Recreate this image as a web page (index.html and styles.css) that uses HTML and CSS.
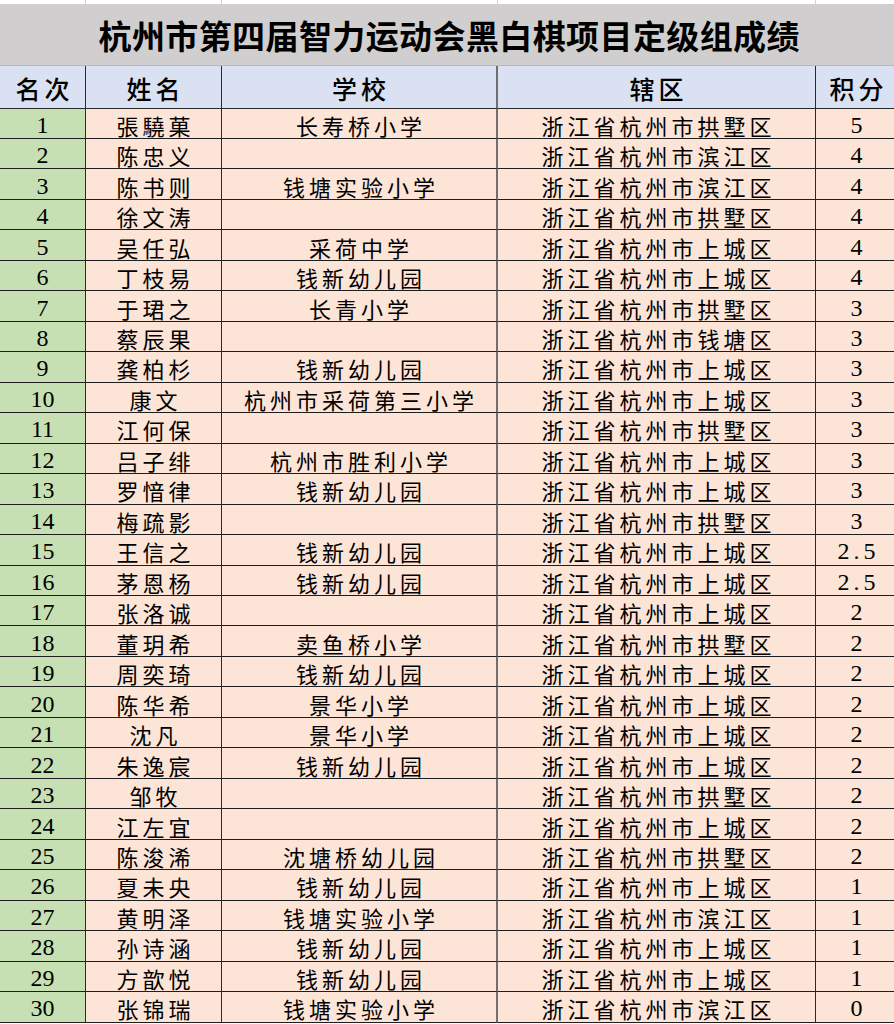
FILE: index.html
```html
<!DOCTYPE html>
<html lang="zh-CN">
<head>
<meta charset="utf-8">
<title>杭州市第四届智力运动会黑白棋项目定级组成绩</title>
<link rel="stylesheet" href="styles.css">
</head>
<body>
<div class="sheet">
  <div class="strip"></div><div class="strip"></div><div class="strip"></div><div class="strip"></div><div class="strip"></div>
  <div class="title">杭州市第四届智力运动会黑白棋项目定级组成绩</div>
  <div class="hd c1">名次</div><div class="hd c2">姓名</div><div class="hd c3">学校</div><div class="hd c4">辖区</div><div class="hd c5">积分</div>

  <div class="rk">1</div><div class="nm">張驍菓</div><div class="sc">长寿桥小学</div><div class="ar">浙江省杭州市拱墅区</div><div class="pt">5</div>
  <div class="rk">2</div><div class="nm">陈忠义</div><div class="sc"></div><div class="ar">浙江省杭州市滨江区</div><div class="pt">4</div>
  <div class="rk">3</div><div class="nm">陈书则</div><div class="sc">钱塘实验小学</div><div class="ar">浙江省杭州市滨江区</div><div class="pt">4</div>
  <div class="rk">4</div><div class="nm">徐文涛</div><div class="sc"></div><div class="ar">浙江省杭州市拱墅区</div><div class="pt">4</div>
  <div class="rk">5</div><div class="nm">吴任弘</div><div class="sc">采荷中学</div><div class="ar">浙江省杭州市上城区</div><div class="pt">4</div>
  <div class="rk">6</div><div class="nm">丁枝易</div><div class="sc">钱新幼儿园</div><div class="ar">浙江省杭州市上城区</div><div class="pt">4</div>
  <div class="rk">7</div><div class="nm">于珺之</div><div class="sc">长青小学</div><div class="ar">浙江省杭州市拱墅区</div><div class="pt">3</div>
  <div class="rk">8</div><div class="nm">蔡辰果</div><div class="sc"></div><div class="ar">浙江省杭州市钱塘区</div><div class="pt">3</div>
  <div class="rk">9</div><div class="nm">龚柏杉</div><div class="sc">钱新幼儿园</div><div class="ar">浙江省杭州市上城区</div><div class="pt">3</div>
  <div class="rk">10</div><div class="nm">康文</div><div class="sc">杭州市采荷第三小学</div><div class="ar">浙江省杭州市上城区</div><div class="pt">3</div>
  <div class="rk">11</div><div class="nm">江何保</div><div class="sc"></div><div class="ar">浙江省杭州市拱墅区</div><div class="pt">3</div>
  <div class="rk">12</div><div class="nm">吕子绯</div><div class="sc">杭州市胜利小学</div><div class="ar">浙江省杭州市上城区</div><div class="pt">3</div>
  <div class="rk">13</div><div class="nm">罗愔律</div><div class="sc">钱新幼儿园</div><div class="ar">浙江省杭州市上城区</div><div class="pt">3</div>
  <div class="rk">14</div><div class="nm">梅疏影</div><div class="sc"></div><div class="ar">浙江省杭州市拱墅区</div><div class="pt">3</div>
  <div class="rk">15</div><div class="nm">王信之</div><div class="sc">钱新幼儿园</div><div class="ar">浙江省杭州市上城区</div><div class="pt wide">2.5</div>
  <div class="rk">16</div><div class="nm">茅恩杨</div><div class="sc">钱新幼儿园</div><div class="ar">浙江省杭州市上城区</div><div class="pt wide">2.5</div>
  <div class="rk">17</div><div class="nm">张洛诚</div><div class="sc"></div><div class="ar">浙江省杭州市上城区</div><div class="pt">2</div>
  <div class="rk">18</div><div class="nm">董玥希</div><div class="sc">卖鱼桥小学</div><div class="ar">浙江省杭州市拱墅区</div><div class="pt">2</div>
  <div class="rk">19</div><div class="nm">周奕琦</div><div class="sc">钱新幼儿园</div><div class="ar">浙江省杭州市上城区</div><div class="pt">2</div>
  <div class="rk">20</div><div class="nm">陈华希</div><div class="sc">景华小学</div><div class="ar">浙江省杭州市上城区</div><div class="pt">2</div>
  <div class="rk">21</div><div class="nm">沈凡</div><div class="sc">景华小学</div><div class="ar">浙江省杭州市上城区</div><div class="pt">2</div>
  <div class="rk">22</div><div class="nm">朱逸宸</div><div class="sc">钱新幼儿园</div><div class="ar">浙江省杭州市上城区</div><div class="pt">2</div>
  <div class="rk">23</div><div class="nm">邹牧</div><div class="sc"></div><div class="ar">浙江省杭州市拱墅区</div><div class="pt">2</div>
  <div class="rk">24</div><div class="nm">江左宜</div><div class="sc"></div><div class="ar">浙江省杭州市上城区</div><div class="pt">2</div>
  <div class="rk">25</div><div class="nm">陈浚浠</div><div class="sc">沈塘桥幼儿园</div><div class="ar">浙江省杭州市拱墅区</div><div class="pt">2</div>
  <div class="rk">26</div><div class="nm">夏未央</div><div class="sc">钱新幼儿园</div><div class="ar">浙江省杭州市上城区</div><div class="pt">1</div>
  <div class="rk">27</div><div class="nm">黄明泽</div><div class="sc">钱塘实验小学</div><div class="ar">浙江省杭州市滨江区</div><div class="pt">1</div>
  <div class="rk">28</div><div class="nm">孙诗涵</div><div class="sc">钱新幼儿园</div><div class="ar">浙江省杭州市上城区</div><div class="pt">1</div>
  <div class="rk">29</div><div class="nm">方歆悦</div><div class="sc">钱新幼儿园</div><div class="ar">浙江省杭州市上城区</div><div class="pt">1</div>
  <div class="rk">30</div><div class="nm">张锦瑞</div><div class="sc">钱塘实验小学</div><div class="ar">浙江省杭州市滨江区</div><div class="pt">0</div>
</div>
</body>
</html>
```

FILE: styles.css
```css
html, body {
  margin: 0;
  padding: 0;
  background: #ffffff;
  overflow: hidden;
}

.sheet {
  display: grid;
  grid-template-columns: 86px 136px 276px 318px 82px;
  grid-template-rows: 4px 62px 42.5px repeat(30, 30.47px);
  width: 898px;
  font-family: "Noto Sans CJK SC", "Noto Sans", sans-serif;
  color: #000000;
  line-height: 1;
}

.sheet > div {
  box-sizing: border-box;
  display: flex;
  align-items: center;
  justify-content: center;
  white-space: nowrap;
}

.strip {
  background: #ffffff;
  border-right: 1px solid #d4d4d4;
}

.title {
  grid-column: 1 / 6;
  background: #d0cece;
  font-size: 33px;
  font-weight: 700;
  letter-spacing: 0.4px;
  text-indent: 0.4px;
  padding-top: 1px;
  border-bottom: 1px solid #b8b8b8;
}

.hd {
  background: #d9e1f2;
  font-size: 25px;
  font-weight: 500;
  letter-spacing: 4px;
  text-indent: 4px;
  padding-top: 4px;
  border-right: 1px solid #2a2a2a;
  border-bottom: 1.5px solid #2a2a2a;
}

.hd.c3 {
  border-right: 2px solid #6f6f6f;
}

.rk, .nm, .sc, .ar, .pt {
  border-bottom: 1px solid #1e1e1e;
  border-right: 1px solid #2a2a2a;
  padding-top: 3px;
}

.rk {
  background: #c6e0b4;
  font-family: "Liberation Serif", "Times New Roman", serif;
  font-size: 24px;
}

.nm, .sc, .ar {
  background: #fce4d6;
  font-size: 22px;
  letter-spacing: 4px;
  text-indent: 4px;
}

.sc {
  border-right: 2px solid #6f6f6f;
}

.pt {
  background: #fce4d6;
  font-family: "Liberation Serif", "Times New Roman", serif;
  font-size: 24px;
}

.pt.wide {
  letter-spacing: 4px;
  text-indent: 4px;
}
```
